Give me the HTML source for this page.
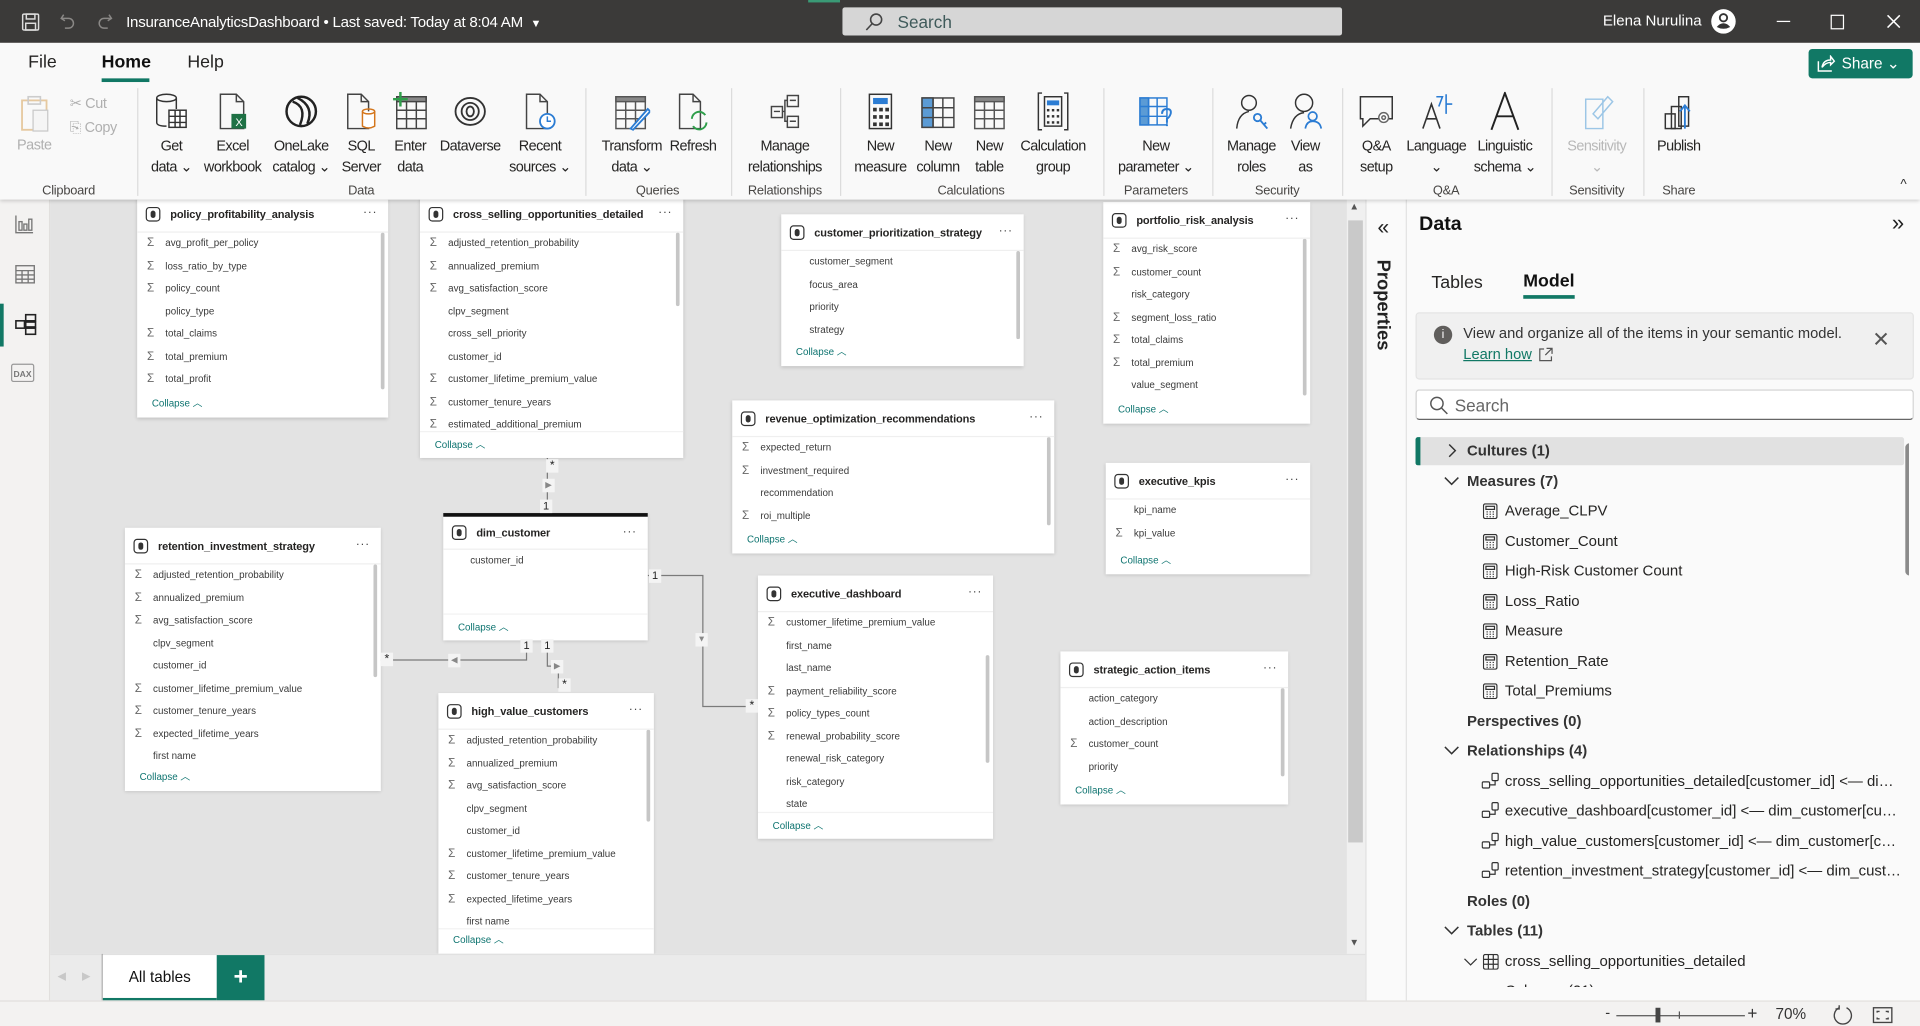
<!DOCTYPE html>
<html><head><meta charset="utf-8">
<style>
*{box-sizing:border-box;margin:0;padding:0}
html,body{width:1920px;height:1026px;overflow:hidden;background:#f3f2f1;font-family:"Liberation Sans",sans-serif}
#s{position:absolute;left:0;top:0;width:1568px;height:837.8px;transform:scale(1.22449);transform-origin:0 0;overflow:hidden;background:#f3f2f1}
.a{position:absolute}
#tb{left:0;top:0;width:1568px;height:35px;background:#3b3a39;color:#fff}
#rb{left:0;top:35px;width:1568px;height:128px;background:#f9f9f9;box-shadow:0 1px 3px rgba(0,0,0,.18);z-index:5}
.tab{font-size:14.5px;color:#252423;top:8px}
.btn{width:80px;text-align:center;font-size:11.8px;letter-spacing:-.45px;color:#252423;line-height:17px;top:40px;white-space:nowrap}
.btn svg{display:block;margin:0 auto 4px auto}
.gl{font-size:10.5px;letter-spacing:-.2px;color:#484644;top:115px;text-align:center;width:100px}
.sep{top:37px;width:1px;height:88px;background:#dcdcdc}
#cv{left:41px;top:163px;width:1059px;height:616px;overflow:hidden;background:#e3e3e3}
#cvi{left:-41px;top:-163px;width:1200px;height:1000px}
.card{position:absolute;background:#fff;box-shadow:0 1px 3px rgba(0,0,0,.16);overflow:hidden}
.hd{position:relative;height:30px;border-bottom:1px solid #efefef}
.hd b{position:absolute;left:27px;top:0;line-height:30px;font-size:9px;color:#252423;font-weight:bold;letter-spacing:-.1px;white-space:nowrap}
.ti{position:absolute;left:7px;top:9px;width:12px;height:12px;border:1.3px solid #333;border-radius:3px}
.ti:after{content:"";position:absolute;left:2.5px;top:2px;width:4.5px;height:5.5px;background:#333;border-radius:2px}
.dots{position:absolute;right:9px;top:0;line-height:28px;font-size:10px;color:#444;letter-spacing:.5px}
.rows{position:relative;overflow:hidden}
.r{position:relative;height:18.5px;line-height:18.5px;padding-left:23px;font-size:8px;color:#3a3a3a;white-space:nowrap}
.r i{position:absolute;left:8px;top:0;font-style:normal;font-size:9.5px;color:#666}
.sb{position:absolute;right:3px;width:3px;background:#c6c6c6;border-radius:2px}
.ft{height:22px;line-height:22px;padding-left:12px;font-size:8px;color:#0e7470;border-top:1px solid #f2f2f2}
.mk{position:absolute;background:#f4f4f4;font-size:10px;color:#222;text-align:center;line-height:11px;width:10px;height:11px;z-index:3}
.tr{position:absolute;left:0;width:410px;height:24px;line-height:24px;font-size:12.2px;color:#252423;white-space:nowrap;overflow:hidden;text-overflow:ellipsis}
.tr svg{position:absolute}
</style></head><body><div id="s">

<div id="tb" class="a">
 <svg class="a" style="left:17px;top:10px" width="16" height="16" viewBox="0 0 16 16" fill="none" stroke="#ddd" stroke-width="1.2"><rect x="1.5" y="1.5" width="13" height="13" rx="1"/><rect x="4.5" y="1.5" width="7" height="4"/><rect x="4" y="9" width="8" height="5.5"/></svg>
 <svg class="a" style="left:48px;top:10px" width="14" height="15" viewBox="0 0 14 15" fill="none" stroke="#8a8886" stroke-width="1.2"><path d="M4 2 L2 5 L5 7"/><path d="M2 5 H8 a4 4 0 0 1 0 8 H5"/></svg>
 <svg class="a" style="left:79px;top:10px" width="14" height="15" viewBox="0 0 14 15" fill="none" stroke="#8a8886" stroke-width="1.2"><path d="M10 2 L12 5 L9 7"/><path d="M12 5 H6 a4 4 0 0 0 0 8 H9"/></svg>
 <div class="a" style="left:103px;top:11px;font-size:12.3px;letter-spacing:-.2px;color:#fff;white-space:nowrap">InsuranceAnalyticsDashboard • Last saved: Today at 8:04 AM <span style="font-size:9px;margin-left:3px">▼</span></div>
 <div class="a" style="left:660px;top:0;width:26px;height:2px;background:#3a9a76"></div>
 <div class="a" style="left:688px;top:6px;width:408px;height:23px;background:#d6d6d6;border-radius:2px">
  <svg class="a" style="left:18px;top:4px" width="16" height="16" viewBox="0 0 16 16" fill="none" stroke="#444" stroke-width="1.3"><circle cx="9.5" cy="6" r="4.5"/><path d="M6.3 9.3 L1.5 14.5"/></svg>
  <div class="a" style="left:45px;top:4px;font-size:14px;color:#3f5a5a">Search</div>
 </div>
 <div class="a" style="left:1309px;top:10px;font-size:12.3px;color:#fff">Elena Nurulina</div>
 <svg class="a" style="left:1397px;top:7px" width="21" height="21" viewBox="0 0 21 21"><circle cx="10.5" cy="10.5" r="10" fill="#fff"/><circle cx="10.5" cy="7.5" r="3" fill="none" stroke="#333" stroke-width="1.5"/><path d="M5 15 Q10.5 9 16 15 Q10.5 18 5 15Z" fill="#333"/></svg>
 <div class="a" style="left:1451px;top:17px;width:11px;height:1.3px;background:#fff"></div>
 <div class="a" style="left:1495px;top:12px;width:11px;height:12px;border:1.3px solid #fff"></div>
 <svg class="a" style="left:1541px;top:12px" width="11" height="11" viewBox="0 0 11 11" stroke="#fff" stroke-width="1.2"><path d="M0.5 0.5 L10.5 10.5 M10.5 0.5 L0.5 10.5"/></svg>
</div>

<div id="rb" class="a">
 <div class="a tab" style="left:23px">File</div>
 <div class="a tab" style="left:83px;color:#111;font-weight:bold;font-size:14.5px">Home</div>
 <div class="a" style="left:83px;top:29px;width:39px;height:3px;background:#117865"></div>
 <div class="a tab" style="left:153px">Help</div>
 <div class="a" style="left:1477px;top:5px;width:85px;height:24px;background:#117865;border-radius:3px;color:#fff;font-size:12.5px;line-height:24px;padding-left:27px">Share ⌄
  <svg class="a" style="left:7px;top:5px" width="15" height="14" viewBox="0 0 15 14" fill="none" stroke="#fff" stroke-width="1.2"><path d="M1 5 V13 H12"/><path d="M4 10 Q5 4 11 4 V1 L14 5 L11 8 V6 Q7 6 4 10Z"/></svg>
 </div>

 <div class="a" style="left:5px;top:42px;width:46px;text-align:center;font-size:11.8px;letter-spacing:-.4px;color:#b0b0b0">
  <svg width="30" height="32" viewBox="0 0 30 32" style="display:block;margin:0 auto 2px"><rect x="5" y="5" width="20" height="24" fill="none" stroke="#e6c9a0" stroke-width="1.5"/><rect x="10" y="2" width="10" height="6" fill="none" stroke="#ccc" stroke-width="1.3"/><rect x="14" y="13" width="12" height="17" fill="#f5f5f5" stroke="#c8c8c8"/></svg>
  <div>Paste</div></div>
 <div class="a" style="left:57px;top:39px;font-size:11.8px;letter-spacing:-.3px;color:#b0b0b0;line-height:20px">✂ Cut<br>⎘ Copy</div>
 <div class="a sep" style="left:112px"></div>

 <div class="a btn" style="left:100px">
  <svg width="30" height="32" viewBox="0 0 30 32" fill="none" stroke="#333" stroke-width="1.2"><ellipse cx="11" cy="5" rx="8" ry="3"/><path d="M3 5 V25 Q3 28 11 28"/><path d="M19 5 V14"/><rect x="13" y="15" width="14" height="14" fill="#fff"/><path d="M13 20 H27 M13 25 H27 M18 15 V29 M22 15 V29"/></svg>
  Get<br>data ⌄</div>
 <div class="a btn" style="left:150px">
  <svg width="30" height="32" viewBox="0 0 30 32" fill="none" stroke="#444" stroke-width="1.2"><path d="M5 2 H18 L24 8 V30 H5Z"/><path d="M18 2 V8 H24"/><rect x="14" y="18" width="12" height="12" fill="#1e7145" stroke="none"/><text x="20" y="28" font-size="9" fill="#fff" stroke="none" text-anchor="middle" font-family="Liberation Sans">X</text></svg>
  Excel<br>workbook</div>
 <div class="a btn" style="left:206px">
  <svg width="30" height="32" viewBox="0 0 30 32" fill="none" stroke="#222" stroke-width="2"><circle cx="15" cy="16" r="12"/><path d="M8 8 Q20 12 14 27" /><path d="M12 5 Q26 12 20 26"/></svg>
  OneLake<br>catalog ⌄</div>
 <div class="a btn" style="left:255px">
  <svg width="30" height="32" viewBox="0 0 30 32" fill="none" stroke="#444" stroke-width="1.2"><path d="M4 2 H15 L21 8 V30 H4Z"/><path d="M15 2 V8 H21"/><path d="M16 16 V28 Q21 31 26 28 V16" stroke="#d4761c" fill="#fff"/><ellipse cx="21" cy="16" rx="5" ry="2" stroke="#d4761c"/></svg>
  SQL<br>Server</div>
 <div class="a btn" style="left:295px">
  <svg width="30" height="32" viewBox="0 0 30 32" fill="none" stroke="#444" stroke-width="1.2"><rect x="4" y="4" width="24" height="26"/><rect x="4" y="4" width="24" height="4" fill="#888"/><path d="M4 15 H28 M4 22 H28 M12 8 V30 M20 8 V30"/><path d="M7 0 V12 M1 6 H13" stroke="#2e9e4a" stroke-width="2"/></svg>
  Enter<br>data</div>
 <div class="a btn" style="left:344px">
  <svg width="30" height="32" viewBox="0 0 30 32" fill="none" stroke="#333" stroke-width="1.5"><ellipse cx="15" cy="16" rx="12" ry="11"/><ellipse cx="15" cy="16" rx="7" ry="7"/><ellipse cx="15" cy="16" rx="3" ry="4"/></svg>
  Dataverse<br>&nbsp;</div>
 <div class="a btn" style="left:401px">
  <svg width="30" height="32" viewBox="0 0 30 32" fill="none" stroke="#444" stroke-width="1.2"><path d="M4 2 H15 L21 8 V30 H4Z"/><path d="M15 2 V8 H21"/><circle cx="21" cy="24" r="6" fill="#fff" stroke="#2b7cd3" stroke-width="1.5"/><path d="M21 20 V24 H24" stroke="#2b7cd3"/></svg>
  Recent<br>sources ⌄</div>
 <div class="a gl" style="left:245px">Data</div>
 <div class="a gl" style="left:6px">Clipboard</div>
 <div class="a sep" style="left:478px"></div>

 <div class="a btn" style="left:476px">
  <svg width="30" height="32" viewBox="0 0 30 32" fill="none" stroke="#555" stroke-width="1.2"><rect x="2" y="4" width="24" height="26"/><rect x="2" y="4" width="24" height="4" fill="#888"/><path d="M2 15 H26 M2 22 H26 M10 8 V30 M18 8 V30"/><path d="M14 30 L28 14 L30 16 L16 31Z" fill="#fff" stroke="#2b7cd3" stroke-width="1.5"/></svg>
  Transform<br>data ⌄</div>
 <div class="a btn" style="left:526px">
  <svg width="30" height="32" viewBox="0 0 30 32" fill="none" stroke="#444" stroke-width="1.2"><path d="M4 2 H15 L21 8 V30 H4Z"/><path d="M15 2 V8 H21"/><path d="M14 22 A6 6 0 0 1 25 19 M26 25 A6 6 0 0 1 15 28" stroke="#2e9e4a" stroke-width="1.6"/></svg>
  Refresh<br>&nbsp;</div>
 <div class="a gl" style="left:487px">Queries</div>
 <div class="a sep" style="left:597px"></div>

 <div class="a btn" style="left:601px">
  <svg width="30" height="32" viewBox="0 0 30 32" fill="none" stroke="#444" stroke-width="1.2"><rect x="17" y="3" width="9" height="9"/><rect x="17" y="20" width="9" height="9"/><rect x="4" y="12" width="9" height="9"/><path d="M13 16 H15 V7 H17 M15 16 V24 H17"/><path d="M19 7 H24 M19 24 H24 M6 16 H11"/></svg>
  Manage<br>relationships</div>
 <div class="a gl" style="left:591px">Relationships</div>
 <div class="a sep" style="left:686px"></div>

 <div class="a btn" style="left:679px">
  <svg width="30" height="32" viewBox="0 0 30 32" fill="none" stroke="#333" stroke-width="1.2"><rect x="6" y="2" width="18" height="28"/><rect x="9" y="5" width="12" height="5" fill="#2b7cd3" stroke="none"/><g fill="#333" stroke="none"><rect x="9" y="13" width="3" height="3"/><rect x="14" y="13" width="3" height="3"/><rect x="19" y="13" width="3" height="3"/><rect x="9" y="19" width="3" height="3"/><rect x="14" y="19" width="3" height="3"/><rect x="19" y="19" width="3" height="3"/><rect x="9" y="25" width="3" height="3"/><rect x="14" y="25" width="3" height="3"/><rect x="19" y="25" width="3" height="3"/></g></svg>
  New<br>measure</div>
 <div class="a btn" style="left:726px">
  <svg width="30" height="32" viewBox="0 0 30 32" fill="none" stroke="#444" stroke-width="1.2"><rect x="2" y="5" width="26" height="24"/><rect x="2" y="5" width="9" height="24" fill="#5b9bd5"/><path d="M2 13 H28 M2 21 H28 M11 5 V29 M19 5 V29"/></svg>
  New<br>column</div>
 <div class="a btn" style="left:768px">
  <svg width="30" height="32" viewBox="0 0 30 32" fill="none" stroke="#555" stroke-width="1.2"><rect x="3" y="4" width="24" height="26"/><rect x="3" y="4" width="24" height="4" fill="#888"/><path d="M3 15 H27 M3 22 H27 M11 8 V30 M19 8 V30"/></svg>
  New<br>table</div>
 <div class="a btn" style="left:820px">
  <svg width="30" height="32" viewBox="0 0 30 32" fill="none" stroke="#333" stroke-width="1.2"><path d="M6 1 H3 V31 H6 M24 1 H27 V31 H24"/><rect x="8" y="4" width="14" height="24"/><rect x="10" y="7" width="10" height="4" fill="#2b7cd3" stroke="none"/><g fill="#333" stroke="none"><rect x="10" y="14" width="2" height="2"/><rect x="14" y="14" width="2" height="2"/><rect x="18" y="14" width="2" height="2"/><rect x="10" y="19" width="2" height="2"/><rect x="14" y="19" width="2" height="2"/><rect x="18" y="19" width="2" height="2"/><rect x="10" y="24" width="2" height="2"/><rect x="14" y="24" width="2" height="2"/><rect x="18" y="24" width="2" height="2"/></g></svg>
  Calculation<br>group</div>
 <div class="a gl" style="left:743px">Calculations</div>
 <div class="a sep" style="left:901px"></div>

 <div class="a btn" style="left:904px">
  <svg width="30" height="32" viewBox="0 0 30 32" fill="none" stroke="#2b7cd3" stroke-width="1.2"><rect x="2" y="5" width="22" height="22"/><rect x="2" y="5" width="7" height="22" fill="#5b9bd5"/><path d="M2 12 H24 M2 20 H24 M9 5 V27 M16 5 V27"/><path d="M20 18 Q20 14 24 14 Q28 14 27 18 Q26 21 24 22 V25 M24 27 V28" stroke-width="1.6"/></svg>
  New<br>parameter ⌄</div>
 <div class="a gl" style="left:894px">Parameters</div>
 <div class="a sep" style="left:990px"></div>

 <div class="a btn" style="left:982px">
  <svg width="30" height="32" viewBox="0 0 30 32" fill="none" stroke="#333" stroke-width="1.2"><circle cx="13" cy="9" r="6"/><path d="M3 30 Q4 18 13 16"/><circle cx="20" cy="21" r="3" stroke="#2b7cd3" stroke-width="1.5"/><path d="M22 23 L28 30 M25 27 L27 25" stroke="#2b7cd3" stroke-width="1.5"/></svg>
  Manage<br>roles</div>
 <div class="a btn" style="left:1026px">
  <svg width="30" height="32" viewBox="0 0 30 32" fill="none" stroke="#333" stroke-width="1.2"><circle cx="14" cy="9" r="7"/><path d="M3 30 Q5 18 14 17"/><circle cx="21" cy="20" r="3.5" stroke="#2b7cd3" stroke-width="1.4"/><path d="M15 30 Q16 24 21 24 Q27 24 28 30" stroke="#2b7cd3" stroke-width="1.4"/></svg>
  View<br>as</div>
 <div class="a gl" style="left:993px">Security</div>
 <div class="a sep" style="left:1096px"></div>

 <div class="a btn" style="left:1084px">
  <svg width="30" height="32" viewBox="0 0 30 32" fill="none" stroke="#333" stroke-width="1.2"><path d="M2 4 H28 V22 H10 L4 28 V22 H2Z"/><circle cx="21" cy="21" r="4" fill="#fff" stroke="#666"/><circle cx="21" cy="21" r="1.5" stroke="#666"/></svg>
  Q&amp;A<br>setup</div>
 <div class="a btn" style="left:1133px">
  <svg width="30" height="32" viewBox="0 0 30 32" fill="none" stroke="#333" stroke-width="1.3"><path d="M4 30 L11 10 L18 30 M7 22 H15"/><path d="M15 4 H20 L17 12 M23 2 V18 M23 10 H28" stroke="#2b7cd3"/></svg>
  Language<br>⌄</div>
 <div class="a btn" style="left:1189px">
  <svg width="30" height="32" viewBox="0 0 30 32" fill="none" stroke="#222" stroke-width="1.6"><path d="M4 31 L15 1 L26 31 M8 20 H22"/></svg>
  Linguistic<br>schema ⌄</div>
 <div class="a gl" style="left:1131px">Q&amp;A</div>
 <div class="a sep" style="left:1267px"></div>

 <div class="a btn" style="left:1264px;color:#b8b8b8">
  <svg width="30" height="32" viewBox="0 0 30 32" fill="none" stroke="#9cc6e6" stroke-width="1.2"><path d="M6 6 H20 V30 H6Z"/><path d="M12 18 L24 4 L28 8 L16 22Z"/></svg>
  Sensitivity<br>⌄</div>
 <div class="a gl" style="left:1254px">Sensitivity</div>
 <div class="a sep" style="left:1342px"></div>

 <div class="a btn" style="left:1331px">
  <svg width="30" height="32" viewBox="0 0 30 32" fill="none" stroke="#333" stroke-width="1.2"><rect x="4" y="18" width="8" height="12"/><rect x="9" y="12" width="8" height="18"/><rect x="15" y="4" width="8" height="24"/><path d="M20 30 V12 M16 16 L20 11 L24 16" stroke="#2b7cd3" stroke-width="1.5"/></svg>
  Publish<br>&nbsp;</div>
 <div class="a gl" style="left:1321px">Share</div>
 <div class="a" style="left:1552px;top:110px;font-size:11px;color:#333">^</div>
</div>

<div class="a" style="left:0;top:163px;width:41px;height:654px;background:#f3f2f1;border-right:1px solid #e1dfdd"></div>
<svg class="a" style="left:12px;top:175px" width="16" height="16" viewBox="0 0 16 16" fill="none" stroke="#777" stroke-width="1.1"><path d="M1 1 V15 H15"/><rect x="3.5" y="6" width="2.5" height="7"/><rect x="7.5" y="8" width="2.5" height="5"/><rect x="11.5" y="4" width="2.5" height="9"/></svg>
<svg class="a" style="left:12px;top:216px" width="17" height="16" viewBox="0 0 17 16" fill="none" stroke="#777" stroke-width="1.1"><rect x="1" y="1" width="15" height="14"/><path d="M1 5 H16 M1 8.5 H16 M1 12 H16 M6 5 V15 M11 5 V15"/></svg>
<div class="a" style="left:0;top:248px;width:3px;height:35px;background:#117865"></div>
<svg class="a" style="left:11px;top:256px" width="20" height="18" viewBox="0 0 20 18" fill="none" stroke="#222" stroke-width="1.3"><rect x="10" y="1" width="8" height="5"/><rect x="10" y="12" width="8" height="5"/><rect x="2" y="6" width="7" height="6"/><rect x="10" y="7" width="8" height="4"/><path d="M9 9 H10"/></svg>
<div class="a" style="left:9px;top:297px;font-size:7px;color:#777;font-weight:bold;border:1px solid #999;border-radius:2px;padding:5px 1px 1px 1px;line-height:7px">DAX</div>

<div id="cv" class="a"><div id="cvi" class="a">
<svg class="a" style="left:0;top:0" width="1200" height="1000" fill="none" stroke="#7a7a7a" stroke-width="1">
 <path d="M447 374 V419"/>
 <path d="M529 470 H574 V577 H619"/>
 <path d="M430 523 V539 H311"/>
 <path d="M447 523 V544 H456 V562"/>
</svg>
<div class="mk" style="left:446px;top:375px">*</div>
<div class="mk" style="left:443px;top:391px;font-size:7px;color:#888">▶</div>
<div class="mk" style="left:441px;top:408px;font-size:9px">1</div>
<div class="mk" style="left:530px;top:465px;font-size:9px">1</div>
<div class="mk" style="left:568px;top:517px;font-size:7px;color:#888">▼</div>
<div class="mk" style="left:609px;top:571px">*</div>
<div class="mk" style="left:425px;top:522px;font-size:9px">1</div>
<div class="mk" style="left:442px;top:522px;font-size:9px">1</div>
<div class="mk" style="left:366px;top:534px;font-size:7px;color:#888">◀</div>
<div class="mk" style="left:311px;top:533px">*</div>
<div class="mk" style="left:450px;top:539px;font-size:7px;color:#888">▶</div>
<div class="mk" style="left:456px;top:554px">*</div>

<div class="card" style="left:112px;top:160px;width:205px;height:181px">
 <div class="hd"><i class="ti"></i><b>policy_profitability_analysis</b><span class="dots">···</span></div>
 <div class="rows" style="height:129px">
  <div class="r"><i>Σ</i>avg_profit_per_policy</div><div class="r"><i>Σ</i>loss_ratio_by_type</div><div class="r"><i>Σ</i>policy_count</div><div class="r">policy_type</div><div class="r"><i>Σ</i>total_claims</div><div class="r"><i>Σ</i>total_premium</div><div class="r"><i>Σ</i>total_profit</div>
  <div class="sb" style="top:0;height:128px"></div></div>
 <div class="ft" style="border:0">Collapse ︿</div></div>

<div class="card" style="left:343px;top:160px;width:215px;height:214px">
 <div class="hd"><i class="ti"></i><b>cross_selling_opportunities_detailed</b><span class="dots">···</span></div>
 <div class="rows" style="height:162px">
  <div class="r"><i>Σ</i>adjusted_retention_probability</div><div class="r"><i>Σ</i>annualized_premium</div><div class="r"><i>Σ</i>avg_satisfaction_score</div><div class="r">clpv_segment</div><div class="r">cross_sell_priority</div><div class="r">customer_id</div><div class="r"><i>Σ</i>customer_lifetime_premium_value</div><div class="r"><i>Σ</i>customer_tenure_years</div><div class="r"><i>Σ</i>estimated_additional_premium</div>
  <div class="sb" style="top:0;height:60px"></div></div>
 <div class="ft">Collapse ︿</div></div>

<div class="card" style="left:638px;top:175px;width:198px;height:124px">
 <div class="hd"><i class="ti"></i><b>customer_prioritization_strategy</b><span class="dots">···</span></div>
 <div class="rows" style="height:72px">
  <div class="r">customer_segment</div><div class="r">focus_area</div><div class="r">priority</div><div class="r">strategy</div>
  <div class="sb" style="top:0;height:72px"></div></div>
 <div class="ft" style="border:0">Collapse ︿</div></div>

<div class="card" style="left:901px;top:165px;width:169px;height:181px">
 <div class="hd"><i class="ti"></i><b>portfolio_risk_analysis</b><span class="dots">···</span></div>
 <div class="rows" style="height:129px">
  <div class="r"><i>Σ</i>avg_risk_score</div><div class="r"><i>Σ</i>customer_count</div><div class="r">risk_category</div><div class="r"><i>Σ</i>segment_loss_ratio</div><div class="r"><i>Σ</i>total_claims</div><div class="r"><i>Σ</i>total_premium</div><div class="r">value_segment</div>
  <div class="sb" style="top:0;height:128px"></div></div>
 <div class="ft" style="border:0">Collapse ︿</div></div>

<div class="card" style="left:598px;top:327px;width:263px;height:125px">
 <div class="hd"><i class="ti"></i><b>revenue_optimization_recommendations</b><span class="dots">···</span></div>
 <div class="rows" style="height:73px">
  <div class="r"><i>Σ</i>expected_return</div><div class="r"><i>Σ</i>investment_required</div><div class="r">recommendation</div><div class="r"><i>Σ</i>roi_multiple</div>
  <div class="sb" style="top:0;height:72px"></div></div>
 <div class="ft" style="border:0">Collapse ︿</div></div>

<div class="card" style="left:903px;top:378px;width:167px;height:91px">
 <div class="hd"><i class="ti"></i><b>executive_kpis</b><span class="dots">···</span></div>
 <div class="rows" style="height:39px">
  <div class="r">kpi_name</div><div class="r"><i>Σ</i>kpi_value</div></div>
 <div class="ft" style="border:0">Collapse ︿</div></div>

<div class="card" style="left:102px;top:431px;width:209px;height:215px">
 <div class="hd"><i class="ti"></i><b>retention_investment_strategy</b><span class="dots">···</span></div>
 <div class="rows" style="height:163px">
  <div class="r"><i>Σ</i>adjusted_retention_probability</div><div class="r"><i>Σ</i>annualized_premium</div><div class="r"><i>Σ</i>avg_satisfaction_score</div><div class="r">clpv_segment</div><div class="r">customer_id</div><div class="r"><i>Σ</i>customer_lifetime_premium_value</div><div class="r"><i>Σ</i>customer_tenure_years</div><div class="r"><i>Σ</i>expected_lifetime_years</div><div class="r">first name</div>
  <div class="sb" style="top:0;height:92px"></div></div>
 <div class="ft" style="border:0">Collapse ︿</div></div>

<div class="card" style="left:362px;top:419px;width:167px;height:104px;border-top:3px solid #111">
 <div class="hd" style="height:27px"><i class="ti" style="top:7px"></i><b style="line-height:27px">dim_customer</b><span class="dots" style="line-height:25px">···</span></div>
 <div class="rows" style="height:52px">
  <div class="r" style="padding-left:22px">customer_id</div></div>
 <div class="ft">Collapse ︿</div></div>

<div class="card" style="left:619px;top:470px;width:192px;height:215px">
 <div class="hd"><i class="ti"></i><b>executive_dashboard</b><span class="dots">···</span></div>
 <div class="rows" style="height:163px">
  <div class="r"><i>Σ</i>customer_lifetime_premium_value</div><div class="r">first_name</div><div class="r">last_name</div><div class="r"><i>Σ</i>payment_reliability_score</div><div class="r"><i>Σ</i>policy_types_count</div><div class="r"><i>Σ</i>renewal_probability_score</div><div class="r">renewal_risk_category</div><div class="r">risk_category</div><div class="r">state</div>
  <div class="sb" style="top:35px;height:88px"></div></div>
 <div class="ft">Collapse ︿</div></div>

<div class="card" style="left:358px;top:566px;width:176px;height:213px">
 <div class="hd"><i class="ti"></i><b>high_value_customers</b><span class="dots">···</span></div>
 <div class="rows" style="height:162px">
  <div class="r"><i>Σ</i>adjusted_retention_probability</div><div class="r"><i>Σ</i>annualized_premium</div><div class="r"><i>Σ</i>avg_satisfaction_score</div><div class="r">clpv_segment</div><div class="r">customer_id</div><div class="r"><i>Σ</i>customer_lifetime_premium_value</div><div class="r"><i>Σ</i>customer_tenure_years</div><div class="r"><i>Σ</i>expected_lifetime_years</div><div class="r">first name</div>
  <div class="sb" style="top:0;height:75px"></div></div>
 <div class="ft" style="height:20px;line-height:18px">Collapse ︿</div></div>

<div class="card" style="left:866px;top:532px;width:186px;height:125px">
 <div class="hd"><i class="ti"></i><b>strategic_action_items</b><span class="dots">···</span></div>
 <div class="rows" style="height:73px">
  <div class="r">action_category</div><div class="r">action_description</div><div class="r"><i>Σ</i>customer_count</div><div class="r">priority</div>
  <div class="sb" style="top:0;height:72px"></div></div>
 <div class="ft" style="border:0">Collapse ︿</div></div>
</div></div>

<div class="a" style="left:1100px;top:163px;width:15px;height:616px;background:#f0f0f0"></div>
<div class="a" style="left:1101px;top:180px;width:12px;height:508px;background:#c9c9c9"></div>
<div class="a" style="left:1102px;top:164px;font-size:8px;color:#555">▲</div>
<div class="a" style="left:1102px;top:765px;font-size:8px;color:#555">▼</div>

<div class="a" style="left:41px;top:779px;width:1074px;height:38px;background:#ebebeb;border-top:1px solid #e1e1e1"></div>
<div class="a" style="left:47px;top:792px;font-size:9px;color:#c8c8c8">◀</div>
<div class="a" style="left:67px;top:792px;font-size:9px;color:#c8c8c8">▶</div>
<div class="a" style="left:83px;top:779px;width:1px;height:38px;background:#aaa"></div>
<div class="a" style="left:84px;top:780px;width:93px;height:37px;background:#fff;border-bottom:2px solid #117865;font-size:12.5px;text-align:center;line-height:36px;color:#111">All tables</div>
<div class="a" style="left:177px;top:780px;width:39px;height:37px;background:#117865;color:#fff;font-size:20px;font-weight:bold;text-align:center;line-height:36px">+</div>

<div class="a" style="left:0;top:817px;width:1568px;height:21px;background:#f3f2f1;border-top:1px solid #e1dfdd"></div>
<div class="a" style="left:1311px;top:820px;font-size:12px;color:#333">-</div>
<div class="a" style="left:1320px;top:829px;width:105px;height:1px;background:#555"></div>
<div class="a" style="left:1352px;top:823px;width:4px;height:12px;background:#444"></div>
<div class="a" style="left:1371px;top:826px;width:1px;height:6px;background:#555"></div>
<div class="a" style="left:1427px;top:819px;font-size:14px;color:#333">+</div>
<div class="a" style="left:1450px;top:821px;font-size:12.5px;color:#333">70%</div>
<svg class="a" style="left:1496px;top:820px" width="18" height="17" viewBox="0 0 18 17" fill="none" stroke="#444" stroke-width="1.1"><path d="M6 3 A7 7 0 1 0 12 3"/><path d="M6 1 V4 H3"/></svg>
<svg class="a" style="left:1529px;top:822px" width="17" height="14" viewBox="0 0 17 14" fill="none" stroke="#444" stroke-width="1.1"><rect x="1" y="1" width="15" height="12"/><path d="M4 5 V4 H6 M11 4 H13 V5 M13 9 V10 H11 M6 10 H4 V9"/></svg>

<div class="a" style="left:1115px;top:163px;width:34px;height:654px;background:#fafafa;border-left:1px solid #e1e1e1;border-right:1px solid #e1e1e1"></div>
<div class="a" style="left:1125px;top:176px;font-size:17px;color:#222">«</div>
<div class="a" style="left:1121px;top:212px;font-size:15px;font-weight:bold;color:#222;writing-mode:vertical-rl">Properties</div>

<div class="a" style="left:1149px;top:163px;width:419px;height:654px;background:#fafafa"></div>
<div class="a" style="left:1159px;top:175px;font-size:16px;font-weight:bold;color:#111">Data</div>
<div class="a" style="left:1545px;top:172px;font-size:18px;color:#222">»</div>
<div class="a" style="left:1169px;top:223px;font-size:14.5px;color:#252423">Tables</div>
<div class="a" style="left:1244px;top:222px;font-size:14.5px;font-weight:bold;color:#111">Model</div>
<div class="a" style="left:1244px;top:241px;width:42px;height:3px;background:#117865"></div>
<div class="a" style="left:1156px;top:255px;width:407px;height:55px;background:#f0f0f0;border:1px solid #e4e4e4;border-radius:3px">
 <div class="a" style="left:14px;top:10px;width:15px;height:15px;border-radius:50%;background:#605e5c;color:#fff;font-size:10px;text-align:center;line-height:15px">i</div>
 <div class="a" style="left:38px;top:9px;font-size:12px;color:#333;white-space:nowrap">View and organize all of the items in your semantic model.</div>
 <div class="a" style="left:38px;top:26px;font-size:12px;color:#117865;text-decoration:underline">Learn how</div>
 <svg class="a" style="left:99px;top:27px" width="13" height="13" viewBox="0 0 13 13" fill="none" stroke="#555" stroke-width="1"><path d="M5 2 H1.5 V11.5 H11 V8 M7 1.5 H11.5 V6 M11.5 1.5 L6 7"/></svg>
 <div class="a" style="left:372px;top:13px;font-size:17px;color:#555;line-height:17px">✕</div>
</div>
<div class="a" style="left:1156px;top:318px;width:407px;height:25px;background:#fff;border:1px solid #d0d0d0;border-bottom:1px solid #666;border-radius:3px">
 <svg class="a" style="left:10px;top:4px" width="16" height="16" viewBox="0 0 16 16" fill="none" stroke="#555" stroke-width="1.2"><circle cx="6.5" cy="6.5" r="5"/><path d="M10 10 L15 15"/></svg>
 <div class="a" style="left:31px;top:4px;font-size:14px;color:#666">Search</div>
</div>

<div class="a" style="left:1149px;top:346px;width:410px;height:460px;overflow:hidden">
 <div class="a" style="left:7px;top:11px;width:399px;height:23px;background:#e1e1e1;border-radius:2px"></div>
 <div class="a" style="left:7px;top:11px;width:4px;height:23px;background:#117865;border-radius:2px 0 0 2px"></div>
 <div class="tr" style="top:10px;padding-left:49px;font-weight:bold;color:#333">Cultures (1)<svg style="left:33px;top:6px" width="8" height="12" viewBox="0 0 8 12" fill="none" stroke="#333" stroke-width="1.2"><path d="M1.5 1 L6.5 6 L1.5 11"/></svg></div>
 <div class="tr" style="top:35px;padding-left:49px;font-weight:bold;color:#333">Measures (7)<svg style="left:30px;top:8px" width="13" height="8" viewBox="0 0 13 8" fill="none" stroke="#333" stroke-width="1.2"><path d="M1 1 L6.5 6.5 L12 1"/></svg></div>
 <div class="tr" style="top:59px;padding-left:80px">Average_CLPV<svg style="left:62px;top:6px" width="12" height="13" viewBox="0 0 12 13" fill="none" stroke="#333" stroke-width="1"><rect x=".5" y=".5" width="11" height="12" rx="1.5"/><rect x="2.5" y="2.5" width="7" height="2.5"/><path d="M3 7 h1 M5.5 7 h1 M8 7 h1 M3 9 h1 M5.5 9 h1 M8 9 h1 M3 11 h1 M5.5 11 h1 M8 11 h1"/></svg></div>
 <div class="tr" style="top:84px;padding-left:80px">Customer_Count<svg style="left:62px;top:6px" width="12" height="13" viewBox="0 0 12 13" fill="none" stroke="#333" stroke-width="1"><rect x=".5" y=".5" width="11" height="12" rx="1.5"/><rect x="2.5" y="2.5" width="7" height="2.5"/><path d="M3 7 h1 M5.5 7 h1 M8 7 h1 M3 9 h1 M5.5 9 h1 M8 9 h1 M3 11 h1 M5.5 11 h1 M8 11 h1"/></svg></div>
 <div class="tr" style="top:108px;padding-left:80px">High-Risk Customer Count<svg style="left:62px;top:6px" width="12" height="13" viewBox="0 0 12 13" fill="none" stroke="#333" stroke-width="1"><rect x=".5" y=".5" width="11" height="12" rx="1.5"/><rect x="2.5" y="2.5" width="7" height="2.5"/><path d="M3 7 h1 M5.5 7 h1 M8 7 h1 M3 9 h1 M5.5 9 h1 M8 9 h1 M3 11 h1 M5.5 11 h1 M8 11 h1"/></svg></div>
 <div class="tr" style="top:133px;padding-left:80px">Loss_Ratio<svg style="left:62px;top:6px" width="12" height="13" viewBox="0 0 12 13" fill="none" stroke="#333" stroke-width="1"><rect x=".5" y=".5" width="11" height="12" rx="1.5"/><rect x="2.5" y="2.5" width="7" height="2.5"/><path d="M3 7 h1 M5.5 7 h1 M8 7 h1 M3 9 h1 M5.5 9 h1 M8 9 h1 M3 11 h1 M5.5 11 h1 M8 11 h1"/></svg></div>
 <div class="tr" style="top:157px;padding-left:80px">Measure<svg style="left:62px;top:6px" width="12" height="13" viewBox="0 0 12 13" fill="none" stroke="#333" stroke-width="1"><rect x=".5" y=".5" width="11" height="12" rx="1.5"/><rect x="2.5" y="2.5" width="7" height="2.5"/><path d="M3 7 h1 M5.5 7 h1 M8 7 h1 M3 9 h1 M5.5 9 h1 M8 9 h1 M3 11 h1 M5.5 11 h1 M8 11 h1"/></svg></div>
 <div class="tr" style="top:182px;padding-left:80px">Retention_Rate<svg style="left:62px;top:6px" width="12" height="13" viewBox="0 0 12 13" fill="none" stroke="#333" stroke-width="1"><rect x=".5" y=".5" width="11" height="12" rx="1.5"/><rect x="2.5" y="2.5" width="7" height="2.5"/><path d="M3 7 h1 M5.5 7 h1 M8 7 h1 M3 9 h1 M5.5 9 h1 M8 9 h1 M3 11 h1 M5.5 11 h1 M8 11 h1"/></svg></div>
 <div class="tr" style="top:206px;padding-left:80px">Total_Premiums<svg style="left:62px;top:6px" width="12" height="13" viewBox="0 0 12 13" fill="none" stroke="#333" stroke-width="1"><rect x=".5" y=".5" width="11" height="12" rx="1.5"/><rect x="2.5" y="2.5" width="7" height="2.5"/><path d="M3 7 h1 M5.5 7 h1 M8 7 h1 M3 9 h1 M5.5 9 h1 M8 9 h1 M3 11 h1 M5.5 11 h1 M8 11 h1"/></svg></div>
 <div class="tr" style="top:231px;padding-left:49px;font-weight:bold;color:#333">Perspectives (0)</div>
 <div class="tr" style="top:255px;padding-left:49px;font-weight:bold;color:#333">Relationships (4)<svg style="left:30px;top:8px" width="13" height="8" viewBox="0 0 13 8" fill="none" stroke="#333" stroke-width="1.2"><path d="M1 1 L6.5 6.5 L12 1"/></svg></div>
 <div class="tr" style="top:280px;padding-left:80px;width:406px">cross_selling_opportunities_detailed[customer_id] &lt;— dim_customer[customer_id]<svg style="left:61px;top:5px" width="15" height="14" viewBox="0 0 15 14" fill="none" stroke="#333" stroke-width="1"><rect x=".5" y="7.5" width="6" height="5" rx="1"/><rect x="8.5" y=".5" width="5" height="6" rx="1"/><path d="M6.5 10 H11 V6.5"/></svg></div>
 <div class="tr" style="top:304px;padding-left:80px;width:406px">executive_dashboard[customer_id] &lt;— dim_customer[customer_id]<svg style="left:61px;top:5px" width="15" height="14" viewBox="0 0 15 14" fill="none" stroke="#333" stroke-width="1"><rect x=".5" y="7.5" width="6" height="5" rx="1"/><rect x="8.5" y=".5" width="5" height="6" rx="1"/><path d="M6.5 10 H11 V6.5"/></svg></div>
 <div class="tr" style="top:329px;padding-left:80px;width:406px">high_value_customers[customer_id] &lt;— dim_customer[customer_id]<svg style="left:61px;top:5px" width="15" height="14" viewBox="0 0 15 14" fill="none" stroke="#333" stroke-width="1"><rect x=".5" y="7.5" width="6" height="5" rx="1"/><rect x="8.5" y=".5" width="5" height="6" rx="1"/><path d="M6.5 10 H11 V6.5"/></svg></div>
 <div class="tr" style="top:353px;padding-left:80px;width:406px">retention_investment_strategy[customer_id] &lt;— dim_customer[customer_id]<svg style="left:61px;top:5px" width="15" height="14" viewBox="0 0 15 14" fill="none" stroke="#333" stroke-width="1"><rect x=".5" y="7.5" width="6" height="5" rx="1"/><rect x="8.5" y=".5" width="5" height="6" rx="1"/><path d="M6.5 10 H11 V6.5"/></svg></div>
 <div class="tr" style="top:378px;padding-left:49px;font-weight:bold;color:#333">Roles (0)</div>
 <div class="tr" style="top:402px;padding-left:49px;font-weight:bold;color:#333">Tables (11)<svg style="left:30px;top:8px" width="13" height="8" viewBox="0 0 13 8" fill="none" stroke="#333" stroke-width="1.2"><path d="M1 1 L6.5 6.5 L12 1"/></svg></div>
 <div class="tr" style="top:427px;padding-left:80px">cross_selling_opportunities_detailed<svg style="left:46px;top:9px" width="12" height="7" viewBox="0 0 12 7" fill="none" stroke="#333" stroke-width="1"><path d="M1 1 L6 6 L11 1"/></svg><svg style="left:62px;top:6px" width="13" height="13" viewBox="0 0 13 13" fill="none" stroke="#333" stroke-width="1"><rect x=".5" y=".5" width="12" height="12" rx="1.5"/><path d="M.5 4.5 H12.5 M.5 8.5 H12.5 M4.5 .5 V12.5 M8.5 .5 V12.5"/></svg></div>
 <div class="tr" style="top:451px;padding-left:80px">Columns (21)</div>
 <div class="a" style="left:407px;top:16px;width:7px;height:108px;background:#8a8a8a;border-radius:4px"></div>
</div>

</div></body></html>
